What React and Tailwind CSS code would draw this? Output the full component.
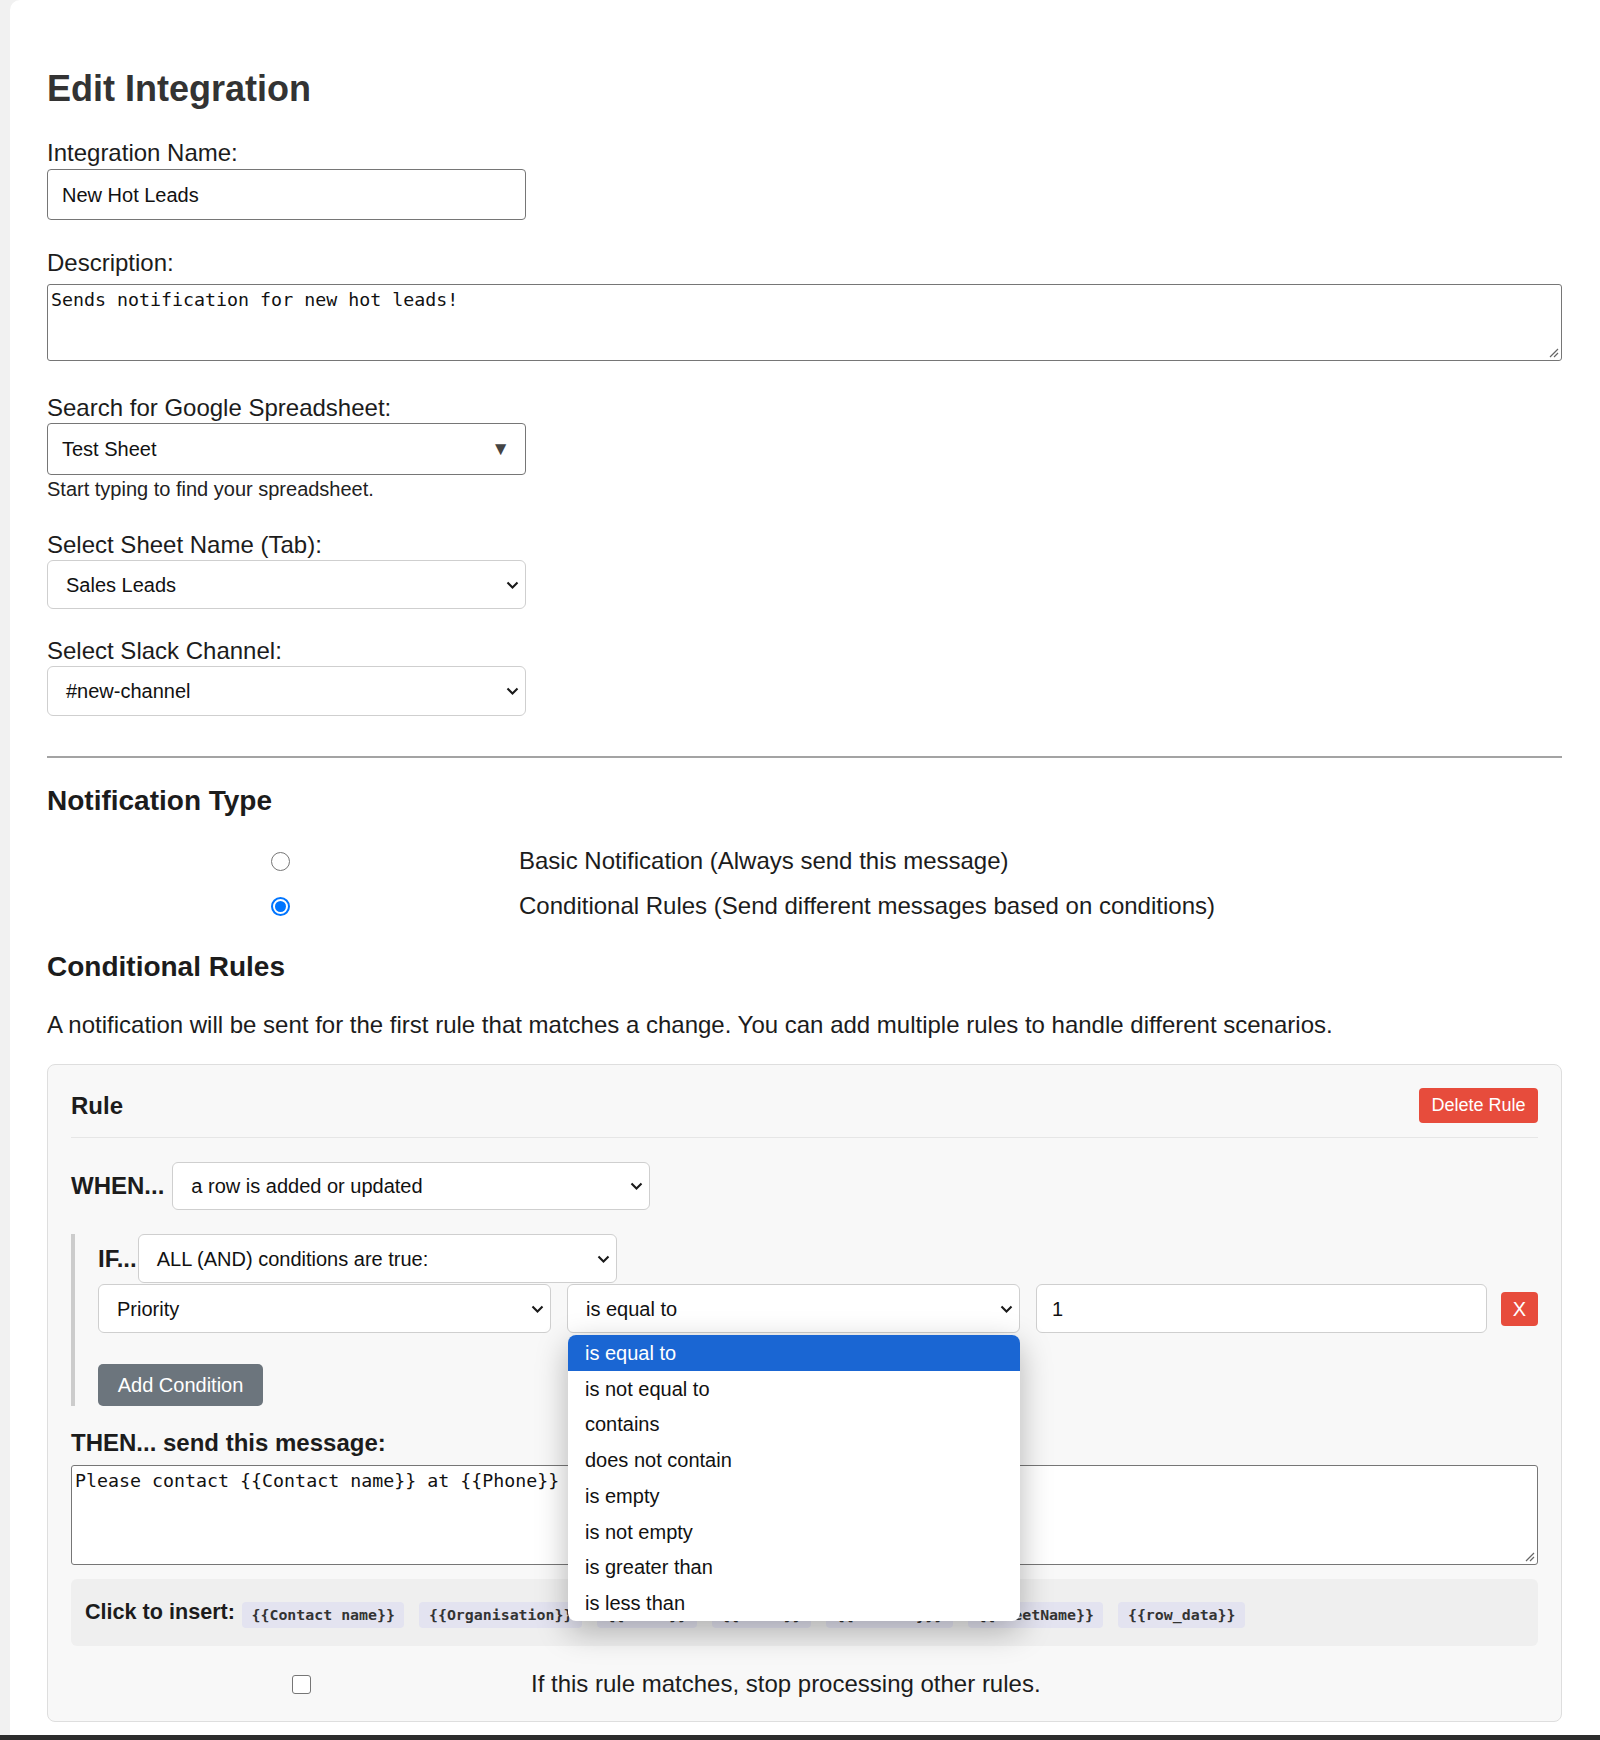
import React from 'react';

const operators = [
  'is equal to',
  'is not equal to',
  'contains',
  'does not contain',
  'is empty',
  'is not empty',
  'is greater than',
  'is less than',
];

const placeholders = [
  '{{Contact name}}',
  '{{Organisation}}',
  '{{Phone}}',
  '{{Email}}',
  '{{Priority}}',
  '{{SheetName}}',
  '{{row_data}}',
];

function Chevron() {
  return (
    <svg width="13" height="8" viewBox="0 0 13 8" className="shrink-0">
      <path d="M1.5 1.5l5 5 5-5" fill="none" stroke="#1a1a1a" strokeWidth="2.1" />
    </svg>
  );
}

// native-looking select box (closed state)
function Select({ value, className = '' }) {
  return (
    <div
      className={`flex items-center justify-between bg-white border border-[#cfcfcf] rounded-[6px] pl-[18px] pr-[6px] text-[20px] text-[#111] ${className}`}
    >
      <span>{value}</span>
      <Chevron />
    </div>
  );
}

function ResizeGrip() {
  return (
    <svg width="12" height="12" viewBox="0 0 12 12" className="absolute right-[2px] bottom-[2px]">
      <path d="M11 3L3 11M11 7L7 11" stroke="#666" strokeWidth="1.2" />
    </svg>
  );
}

function Radio({ checked }) {
  return checked ? (
    <span className="w-[19px] h-[19px] rounded-full border-[2px] border-[#0075ff] flex items-center justify-center bg-white">
      <span className="w-[11px] h-[11px] rounded-full bg-[#0075ff]" />
    </span>
  ) : (
    <span className="w-[19px] h-[19px] rounded-full border-[1.5px] border-[#767676] bg-white" />
  );
}

export default function App() {
  return (
    <div className="h-[1740px] flex flex-col bg-[#f1f1f1] overflow-hidden font-['Liberation_Sans',Arial,sans-serif] text-[#1c1c1c]">
      <div className="flex-1 flex">
        <div className="w-[10px] shrink-0" />
        <div className="flex-1 bg-white rounded-tl-[10px] pl-[37px] pr-[38px] pt-[69px]">
          <h2 className="text-[36px] leading-[40px] font-bold text-[#333]">Edit Integration</h2>

          <div className="mt-[30px] text-[24px] leading-[28px]">Integration Name:</div>
          <div className="mt-[2px] w-[479px] h-[51px] border border-[#767676] rounded-[4px] flex items-center pl-[14px] text-[20px] text-[#111]">
            New Hot Leads
          </div>

          <div className="mt-[29px] text-[24px] leading-[28px]">Description:</div>
          <div className="relative mt-[7px] h-[77px] border border-[#767676] rounded-[3px] px-[3px] pt-[3px] font-['DejaVu_Sans_Mono',monospace] text-[18.3px] leading-[24px] text-[#111]">
            Sends notification for new hot leads!
            <ResizeGrip />
          </div>

          <div className="mt-[33px] text-[24px] leading-[28px]">Search for Google Spreadsheet:</div>
          <div className="mt-[1px] w-[479px] h-[52px] border border-[#767676] rounded-[4px] flex items-center justify-between pl-[14px] pr-[15px] text-[20px] text-[#111]">
            <span>Test Sheet</span>
            <span className="text-[19px] text-[#444]">▼</span>
          </div>
          <div className="mt-[3px] text-[20px] leading-[23px] text-[#222]">Start typing to find your spreadsheet.</div>

          <div className="mt-[30px] text-[24px] leading-[28px]">Select Sheet Name (Tab):</div>
          <Select value="Sales Leads" className="mt-[1px] w-[479px] h-[49px]" />

          <div className="mt-[28px] text-[24px] leading-[28px]">Select Slack Channel:</div>
          <Select value="#new-channel" className="mt-[1px] w-[479px] h-[50px]" />

          <div className="mt-[40px] border-t-2 border-[#a3a3a3]" />

          <h3 className="mt-[27px] text-[28px] leading-[32px] font-bold">Notification Type</h3>

          <div className="mt-[24px] h-[40px] flex items-center">
            <div className="w-[466px] flex justify-center">
              <Radio />
            </div>
            <span className="ml-[6px] text-[24px]">Basic Notification (Always send this message)</span>
          </div>
          <div className="mt-[5px] h-[40px] flex items-center">
            <div className="w-[466px] flex justify-center">
              <Radio checked />
            </div>
            <span className="ml-[6px] text-[24px]">Conditional Rules (Send different messages based on conditions)</span>
          </div>

          <h3 className="mt-[25px] text-[28px] leading-[32px] font-bold">Conditional Rules</h3>
          <p className="mt-[28px] text-[24px] leading-[28px]">
            A notification will be sent for the first rule that matches a change. You can add multiple rules to handle different scenarios.
          </p>

          {/* rule card */}
          <div className="mt-[25px] bg-[#f8f8f8] border border-[#dedede] rounded-[8px] pt-[23px] pb-[23px] pl-[23px] pr-[23px]">
            <div className="h-[35px] flex items-center justify-between">
              <span className="text-[24px] font-bold">Rule</span>
              <button className="w-[119px] h-[35px] bg-[#e74c3c] text-white text-[18px] rounded-[4px] flex items-center justify-center">
                Delete Rule
              </button>
            </div>
            <div className="mt-[14px] border-b border-[#e6e6e6]" />

            <div className="mt-[24px] flex items-center">
              <span className="text-[24px] font-bold">WHEN...</span>
              <Select value="a row is added or updated" className="ml-[8px] w-[478px] h-[48px]" />
            </div>

            <div className="mt-[24px] border-l-[4px] border-[#cccccc] pl-[23px]">
              <div className="flex items-center">
                <span className="text-[24px] font-bold">IF...</span>
                <Select value="ALL (AND) conditions are true:" className="ml-[1px] w-[479px] h-[49px]" />
              </div>
              <div className="mt-[1px] flex items-center">
                <Select value="Priority" className="w-[453px] h-[49px] shrink-0" />
                <div className="relative w-[453px] shrink-0 ml-[16px]">
                  <Select value="is equal to" className="h-[49px]" />
                  <div className="absolute left-[1px] right-0 top-[51px] z-10 bg-white rounded-[8px] overflow-hidden shadow-[0_10px_32px_rgba(0,0,0,0.28)]">
                    {operators.map((op, i) => (
                      <div
                        key={op}
                        className={`h-[35.75px] flex items-center pl-[17px] text-[20px] ${
                          i === 0 ? 'bg-[#1a66d3] text-white' : 'text-[#111]'
                        }`}
                      >
                        {op}
                      </div>
                    ))}
                  </div>
                </div>
                <div className="w-[451px] shrink-0 ml-[16px] h-[49px] bg-white border border-[#cfcfcf] rounded-[6px] flex items-center pl-[15px] text-[20px] text-[#111]">
                  1
                </div>
                <button className="ml-[14px] w-[37px] h-[34px] bg-[#e74c3c] text-white text-[20px] rounded-[4px] flex items-center justify-center">
                  X
                </button>
              </div>
              <button className="mt-[31px] w-[165px] h-[42px] bg-[#6c757d] text-white text-[20px] rounded-[5px] flex items-center justify-center">
                Add Condition
              </button>
            </div>

            <div className="mt-[23px] text-[24px] leading-[28px] font-bold">THEN... send this message:</div>
            <div className="relative mt-[8px] h-[100px] bg-white border border-[#767676] rounded-[3px] px-[3px] pt-[3px] font-['DejaVu_Sans_Mono',monospace] text-[18.3px] leading-[24px] text-[#111]">
              Please contact {'{{Contact name}}'} at {'{{Phone}}'}
              <ResizeGrip />
            </div>

            <div className="mt-[14px] h-[67px] bg-[#efefef] rounded-[6px] px-[14px] flex items-center">
              <span className="text-[21.6px] font-bold mr-[7px]">Click to insert:</span>
              <div className="flex items-center gap-[15px] mt-[5px]">
                {placeholders.map((p) => (
                  <span
                    key={p}
                    className="h-[26px] px-[9.5px] bg-[#e3e3f0] rounded-[4px] flex items-center font-['DejaVu_Sans_Mono',monospace] font-bold text-[14.9px] text-[#333]"
                  >
                    {p}
                  </span>
                ))}
              </div>
            </div>

            <div className="mt-[24px] h-[28px] flex items-center">
              <div className="w-[460px] flex justify-center">
                <span className="w-[19px] h-[19px] rounded-[3px] border-[1.5px] border-[#767676] bg-white" />
              </div>
              <span className="text-[24px]">If this rule matches, stop processing other rules.</span>
            </div>
          </div>
        </div>
      </div>
      <div className="h-[5px] bg-[#2d2d2d]" />
    </div>
  );
}
